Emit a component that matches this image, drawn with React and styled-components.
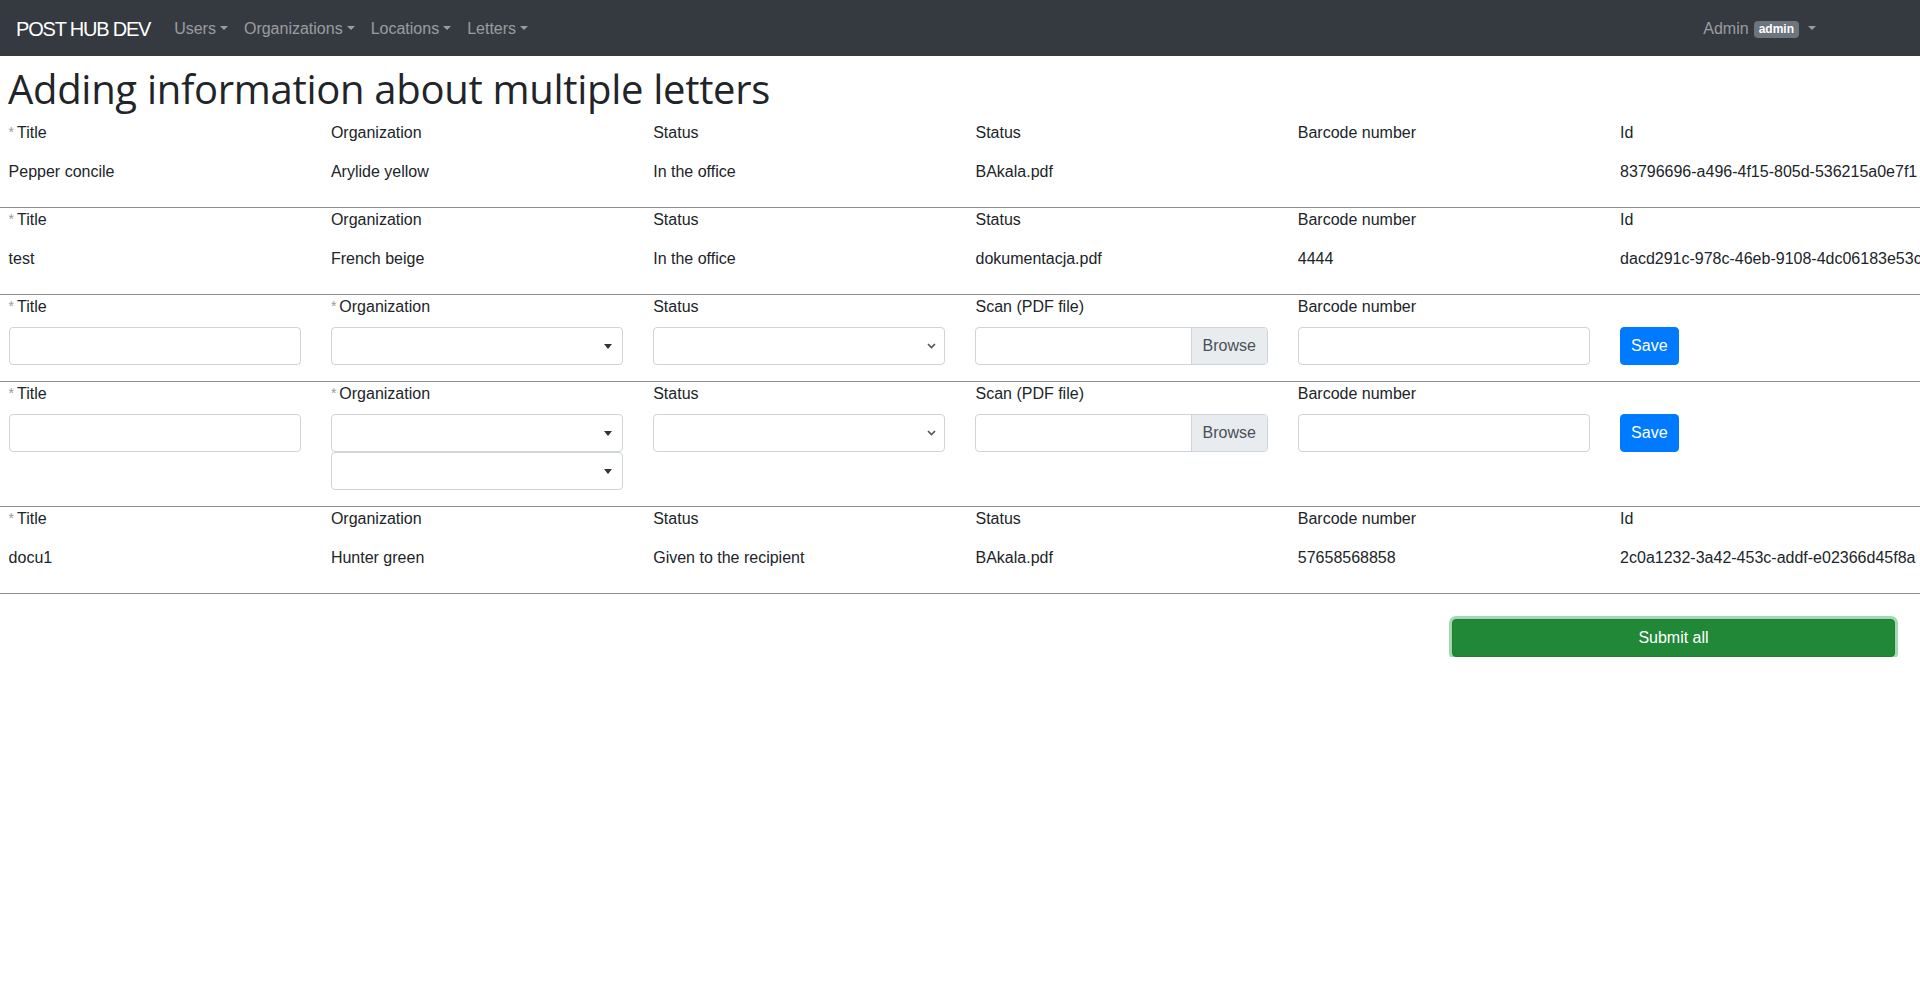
import React from 'react';
import styled, { createGlobalStyle } from 'styled-components';

const GlobalStyle = createGlobalStyle`
  body {
    margin: 0;
    font-family: "Liberation Sans", Arial, sans-serif;
    font-size: 16px;
    color: #212529;
    background: #fff;
    overflow-x: hidden;
  }
  * { box-sizing: border-box; }
`;

const Navbar = styled.nav`
  display: flex;
  align-items: center;
  height: 56px;
  padding: 2px 16px 0;
  background-color: #343a40;
`;

const Brand = styled.a`
  font-size: 20px;
  line-height: 30px;
  color: #fff;
  margin-right: 16px;
  letter-spacing: -1.2px;
  text-decoration: none;
`;

const NavLink = styled.a`
  padding: 8px;
  line-height: 24px;
  color: rgba(255, 255, 255, 0.5);
  text-decoration: none;
  white-space: nowrap;
  &::after {
    content: '';
    display: inline-block;
    margin-left: 4px;
    vertical-align: 4px;
    border-top: 4.8px solid;
    border-right: 4.8px solid transparent;
    border-left: 4.8px solid transparent;
  }
`;

const NavRight = styled.div`
  margin-left: auto;
  margin-right: 80px;
  display: flex;
  align-items: center;
`;

const UserLink = styled(NavLink)`
  &::after { margin-left: 9px; }
`;

const Badge = styled.span`
  display: inline-block;
  margin-left: 5px;
  padding: 3px 5px;
  font-size: 12px;
  font-weight: 700;
  line-height: 11px;
  color: #fff;
  background-color: #6c757d;
  border-radius: 4px;
  vertical-align: 1px;
`;

const Page = styled.main`
  padding-top: 9px;
`;

const Heading = styled.h1`
  margin: 0 0 8px;
  padding-left: 8px;
  font-family: "Open Sans", "Liberation Sans", sans-serif;
  font-size: 40px;
  line-height: 48px;
  font-weight: 500;
  color: #212529;
  letter-spacing: -0.3px;
`;

const LetterRow = styled.div`
  display: grid;
  grid-template-columns: repeat(6, 292.3px);
  column-gap: 30px;
  padding: 0 8px 0 8.6px;
  border-bottom: 1px solid #8e8e8e;
`;

const Field = styled.div`
  display: flex;
  flex-direction: column;
  align-items: flex-start;
  padding-bottom: 16px;
  min-width: 0;
`;

const Label = styled.label`
  display: block;
  height: 24px;
  line-height: 24px;
  margin-bottom: 8px;
  white-space: nowrap;
`;

const Req = styled.span`
  display: inline-block;
  height: 24px;
  line-height: 22px;
  vertical-align: top;
  color: #9a9a9a;
  font-size: 14px;
  margin-right: 3px;
`;

const Value = styled.div`
  height: 38px;
  line-height: 24px;
  padding: 7px 0;
  white-space: nowrap;
`;

const TextInput = styled.input`
  display: block;
  width: 100%;
  height: 38px;
  padding: 6px 12px;
  border: 1px solid #ced4da;
  border-radius: 4px;
  font: inherit;
  background: #fff;
`;

const SelectBox = styled.div`
  width: 100%;
  height: 38px;
  display: flex;
  align-items: center;
  justify-content: flex-end;
  padding-right: ${(p) => (p.$native ? '8px' : '10px')};
  border: 1px solid #ced4da;
  border-radius: 4px;
  background: #fff;
`;

const FileInput = styled.div`
  width: 100%;
  height: 38px;
  display: flex;
  border: 1px solid #ced4da;
  border-radius: 4px;
  overflow: hidden;
`;

const FileName = styled.div`
  flex: 1;
`;

const Browse = styled.div`
  width: 76px;
  display: flex;
  align-items: center;
  justify-content: center;
  background: #e9ecef;
  border-left: 1px solid #ced4da;
  color: #495057;
`;

const SaveButton = styled.button`
  height: 38px;
  padding: 0 10px;
  border: 1px solid #007bff;
  border-radius: 4px;
  background: #007bff;
  color: #fff;
  font: inherit;
`;

const Actions = styled.div`
  display: flex;
  justify-content: flex-end;
  padding: 25px 25px 0 0;
`;

const SubmitButton = styled.button`
  width: 443px;
  height: 38px;
  border: 1px solid #1e7e34;
  border-radius: 4px;
  background: #218838;
  color: #fff;
  font: inherit;
  box-shadow: 0 0 0 3px rgba(72, 180, 97, 0.5);
`;

const Triangle = () => (
  <svg width="8" height="5" viewBox="0 0 8 5">
    <polygon points="0,0 8,0 4,5" fill="#333" />
  </svg>
);

const Chevron = () => (
  <svg width="9" height="6" viewBox="0 0 9 6">
    <path d="M1 1 L4.5 4.5 L8 1" fill="none" stroke="#555" strokeWidth="1.6" />
  </svg>
);

const saved = [
  { title: 'Pepper concile', org: 'Arylide yellow', status: 'In the office', file: 'BAkala.pdf', barcode: '', id: '83796696-a496-4f15-805d-536215a0e7f1' },
  { title: 'test', org: 'French beige', status: 'In the office', file: 'dokumentacja.pdf', barcode: '4444', id: 'dacd291c-978c-46eb-9108-4dc06183e53c' },
];

const last = { title: 'docu1', org: 'Hunter green', status: 'Given to the recipient', file: 'BAkala.pdf', barcode: '57658568858', id: '2c0a1232-3a42-453c-addf-e02366d45f8a' };

function SavedRow({ letter }) {
  const cells = [
    ['Title', letter.title, true],
    ['Organization', letter.org],
    ['Status', letter.status],
    ['Status', letter.file],
    ['Barcode number', letter.barcode],
    ['Id', letter.id],
  ];
  return (
    <LetterRow>
      {cells.map(([label, value, req], i) => (
        <Field key={i}>
          <Label>{req && <Req>*</Req>}{label}</Label>
          <Value>{value || '\u00a0'}</Value>
        </Field>
      ))}
    </LetterRow>
  );
}

function FormRow({ orgSelects = 1 }) {
  return (
    <LetterRow>
      <Field>
        <Label><Req>*</Req>Title</Label>
        <TextInput />
      </Field>
      <Field>
        <Label><Req>*</Req>Organization</Label>
        {Array.from({ length: orgSelects }).map((_, i) => (
          <SelectBox key={i}><Triangle /></SelectBox>
        ))}
      </Field>
      <Field>
        <Label>Status</Label>
        <SelectBox $native><Chevron /></SelectBox>
      </Field>
      <Field>
        <Label>Scan (PDF file)</Label>
        <FileInput>
          <FileName />
          <Browse>Browse</Browse>
        </FileInput>
      </Field>
      <Field>
        <Label>Barcode number</Label>
        <TextInput />
      </Field>
      <Field>
        <Label>{'\u00a0'}</Label>
        <SaveButton>Save</SaveButton>
      </Field>
    </LetterRow>
  );
}

export default function App() {
  return (
    <>
      <GlobalStyle />
      <Navbar>
        <Brand href="#">POST HUB DEV</Brand>
        <NavLink href="#">Users</NavLink>
        <NavLink href="#">Organizations</NavLink>
        <NavLink href="#">Locations</NavLink>
        <NavLink href="#">Letters</NavLink>
        <NavRight>
          <UserLink href="#">Admin<Badge>admin</Badge></UserLink>
        </NavRight>
      </Navbar>
      <Page>
        <Heading>Adding information about multiple letters</Heading>
        {saved.map((l) => <SavedRow key={l.id} letter={l} />)}
        <FormRow />
        <FormRow orgSelects={2} />
        <SavedRow letter={last} />
        <Actions>
          <SubmitButton>Submit all</SubmitButton>
        </Actions>
      </Page>
    </>
  );
}
